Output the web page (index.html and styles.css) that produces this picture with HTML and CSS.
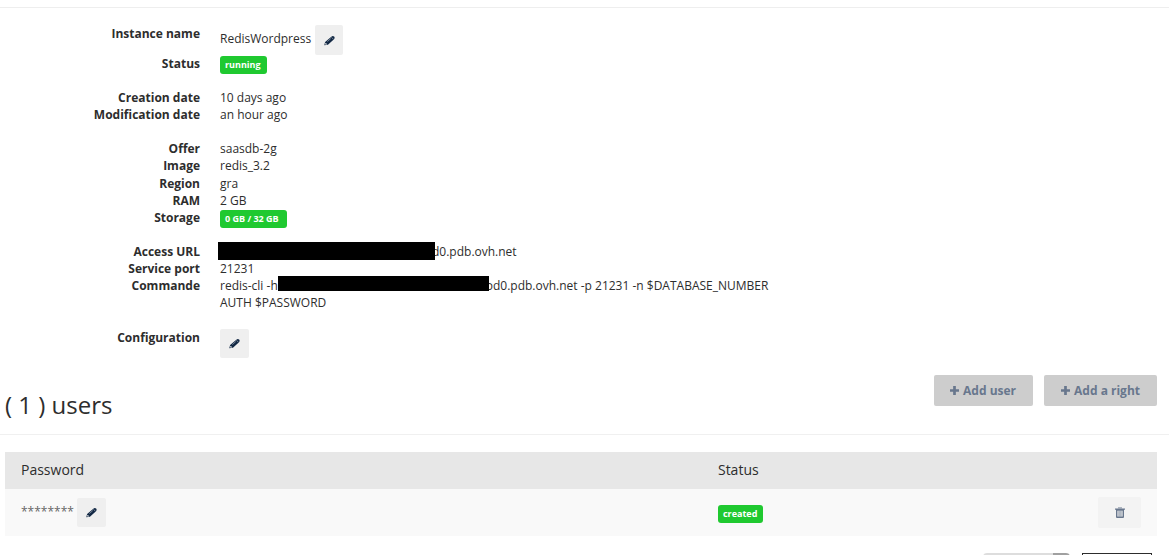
FILE: index.html
```html
<!DOCTYPE html>
<html lang="en">
<head>
<meta charset="utf-8">
<title>RedisWordpress</title>
<link rel="stylesheet" href="styles.css">
</head>
<body>
<svg class="sprite" aria-hidden="true">
  <symbol id="pencil" viewBox="0 0 12 12"><path d="M.3 11.300 1.200 7.700 8 1.800Q9.600.300 11 1.600 12.200 3 10.900 4.500L4.300 10.500Z"/><path d="M1.800 8.500 3.500 10.100 2 10.500 1.200 9.800Z" fill="#efefef"/><path d="m3.600 7.200 3.800-3.300M8.200 2.500l2 2.100" fill="none" stroke="#aab2c0" stroke-width=".7"/></symbol>
  <symbol id="plus" viewBox="0 0 10 10"><path d="M3.500 0h3v3.500H10v3H6.500V10h-3V6.500H0v-3h3.500z"/></symbol>
  <symbol id="trash" viewBox="0 0 10 11"><path d="M3 1.500V0h4v1.500z" opacity=".5"/><path fill-rule="evenodd" d="M0 1.500h10v1.300H9V10q0 1-1 1H2q-1 0-1-1V2.800H0zM2.300 3.800V9.600h5.400V3.800z"/><path d="M2.300 3.800h5.400v5.800H2.300z" opacity=".25"/><path d="M4.100 3.800v5.800M5.900 3.800v5.800" fill="none" stroke="currentColor" stroke-width=".8" opacity=".6"/></symbol>
</svg>
<section class="instance">
  <dl class="details">
    <dt>Instance name</dt>
    <dd class="editable"><span class="value">RedisWordpress</span><button class="icon-button" type="button" aria-label="Edit instance name"><svg class="pencil"><use href="#pencil"/></svg></button></dd>
    <dt>Status</dt>
    <dd><span class="badge">running</span></dd>
  </dl>
  <dl class="details">
    <dt>Creation date</dt><dd>10 days ago</dd>
    <dt>Modification date</dt><dd>an hour ago</dd>
  </dl>
  <dl class="details">
    <dt>Offer</dt><dd>saasdb-2g</dd>
    <dt>Image</dt><dd>redis_3.2</dd>
    <dt class="region">Region</dt><dd class="region">gra</dd>
    <dt>RAM</dt><dd>2 GB</dd>
    <dt>Storage</dt><dd><span class="badge badge-storage">0 GB / 32 GB</span></dd>
  </dl>
  <dl class="details">
    <dt>Access URL</dt><dd><span class="redacted redacted-url"></span>d0.pdb.ovh.net</dd>
    <dt>Service port</dt><dd>21231</dd>
    <dt>Commande</dt>
    <dd>redis-cli -h<span class="redacted redacted-host"></span>od0.pdb.ovh.net -p 21231 -n $DATABASE_NUMBER<br>AUTH $PASSWORD</dd>
  </dl>
  <dl class="details configuration">
    <dt>Configuration</dt>
    <dd class="editable"><button class="icon-button" type="button" aria-label="Edit configuration"><svg class="pencil"><use href="#pencil"/></svg></button></dd>
  </dl>
</section>
<header class="users-header">
  <h2>( 1 ) users</h2>
  <div class="actions">
    <button class="action" type="button"><svg class="plus"><use href="#plus"/></svg>Add user</button>
    <button class="action" type="button"><svg class="plus"><use href="#plus"/></svg>Add a right</button>
  </div>
</header>
<main class="users">
  <table>
    <thead><tr><th class="password-col">Password</th><th>Status</th><th class="tools-col"></th></tr></thead>
    <tbody><tr>
      <td><div class="password"><span class="value">********</span><button class="icon-button" type="button" aria-label="Edit password"><svg class="pencil"><use href="#pencil"/></svg></button></div></td>
      <td><span class="badge">created</span></td>
      <td class="tools-col"><button class="delete" type="button" aria-label="Delete user"><svg class="trash"><use href="#trash"/></svg></button></td>
    </tr></tbody>
  </table>
  <footer class="pager">
    <select class="page-size" aria-label="Rows per page"><option></option></select>
    <button class="page-button" type="button" aria-label="Next page"></button>
  </footer>
</main>
</body>
</html>
```
FILE: styles.css
```css
* { box-sizing: border-box; }
body {
  margin: 0;
  height: 100vh;
  overflow: hidden;
  background: #fff;
  color: #2d2d2d;
  font: 12px/17px "Open Sans", sans-serif;
}
button { font: inherit; border: 0; padding: 0; cursor: pointer; }
.sprite { position: absolute; width: 0; height: 0; }
.instance {
  margin-top: 7px;
  padding-top: 17px;
  border-top: 1px solid #eee;
  display: flex;
  flex-direction: column;
  gap: 17px;
}
.details {
  margin: 0;
  display: grid;
  grid-template-columns: 200px 1fr;
  column-gap: 20px;
}
.details dt { font-weight: 700; text-align: right; }
.details dd { margin: 0; }
.details .region { padding-top: 1px; }
.configuration { padding-top: 1px; }
.editable { display: flex; align-items: center; gap: 4px; }
.value { padding-bottom: 3px; }
.icon-button {
  width: 29px;
  height: 29px;
  display: grid;
  place-items: center;
  background: #efefef;
  border-radius: 2px;
  color: #122844;
}
.pencil { width: 11px; height: 11px; fill: currentColor; }
.details:first-child .icon-button { height: 30px; width: 28px; }
.badge {
  display: block;
  width: fit-content;
  height: 18px;
  margin: 1px 0 -2px;
  padding: 0 6px 0 5px;
  border-radius: 3px;
  background: #1fc930;
  color: #fff;
  font-size: 9px;
  font-weight: 700;
  line-height: 17px;
}
.badge-storage { padding-right: 8px; }
.redacted { display: inline-block; position: relative; vertical-align: top; background: #000; }
.redacted-url { width: 217px; height: 18px; margin: -1px -3px 0 -2px; }
.redacted-host { width: 211px; height: 15px; margin: -1px -3px 0 0; }
.users-header {
  display: flex;
  justify-content: space-between;
  align-items: flex-start;
  padding: 17px 12px 28px 5px;
  border-bottom: 1px solid #f0f0f0;
}
.users-header h2 { margin: 13px 0 0; font-size: 24px; font-weight: 400; line-height: 34px; height: 18px; }
.actions { display: flex; gap: 11px; }
.action {
  height: 31px;
  padding: 0 17px 0 16px;
  display: flex;
  align-items: center;
  gap: 4px;
  border-radius: 2px;
  background: #cdcdcd;
  color: #68778d;
  font-weight: 700;
}
.action + .action { padding-left: 17px; }
.plus { width: 9px; height: 9px; fill: currentColor; }
.users { padding: 17px 12px 0 5px; }
table { width: 100%; border-collapse: collapse; table-layout: fixed; }
th, td { padding: 0 16px; text-align: left; }
th { height: 37px; padding-bottom: 2px; background: #e7e7e7; font-size: 14px; font-weight: 400; }
td { height: 47px; background: #f9f9f9; }
.password-col { width: 60.5%; }
.tools-col { width: 80px; padding: 0 16px; }
.password { display: flex; align-items: center; gap: 3px; color: #666; }
.delete {
  width: 43px;
  height: 31px;
  margin-left: auto;
  display: grid;
  place-items: center;
  border-radius: 2px;
  background: #f3f3f3;
  color: #68778d;
}
.trash { width: 10px; height: 11px; fill: currentColor; }
.pager { display: flex; justify-content: flex-end; gap: 12px; padding: 17px 5px 0; }
.page-size {
  appearance: none;
  width: 87px;
  height: 24px;
  border: 0;
  border-radius: 4px;
  background: linear-gradient(#a0a0a0, #a0a0a0) right / 17px 100% no-repeat, #ddd;
}
.page-button { width: 70px; height: 24px; border: 1px solid #2d2d2d; background: #fff; }
```
